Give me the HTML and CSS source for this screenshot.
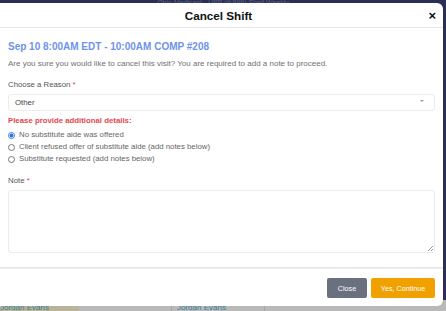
FILE: index.html
```html
<!DOCTYPE html>
<html>
<head>
<meta charset="utf-8">
<link rel="stylesheet" href="styles.css">
</head>
<body>
<div class="page">
  <div class="topbar">Ohio Medicaid - UPP (9:899) Shell Weekly</div>
  <div class="rows">
    <div class="row">
      <span class="cell c1">Jordan Evans</span>
      <span class="cell c2"></span>
      <span class="cell c3">Jordan Evans</span>
      <span class="cell c4"></span>
    </div>
  </div>
</div>
<div class="modal">
  <div class="modal-header">
    <h1 class="modal-title">Cancel Shift</h1>
    <span class="close-x">&#215;</span>
  </div>
  <div class="modal-body">
    <div class="shift">Sep 10 8:00AM EDT - 10:00AM COMP #208</div>
    <p class="intro">Are you sure you would like to cancel this visit? You are required to add a note to proceed.</p>
    <label class="label">Choose a Reason <span class="req">*</span></label>
    <div class="select"><span>Other</span><span class="caret"></span></div>
    <div class="details">Please provide additional details:</div>
    <div class="radios">
      <label class="radio"><span class="dot checked"></span>No substitute aide was offered</label>
      <label class="radio"><span class="dot"></span>Client refused offer of substitute aide (add notes below)</label>
      <label class="radio"><span class="dot"></span>Substitute requested (add notes below)</label>
    </div>
    <label class="label note-label">Note <span class="req">*</span></label>
    <div class="textarea"><span class="grip"></span></div>
  </div>
  <div class="modal-footer">
    <button class="btn btn-close">Close</button>
    <button class="btn btn-yes">Yes, Continue</button>
  </div>
</div>
</body>
</html>
```
FILE: styles.css
```css
* { box-sizing: border-box; }
html, body { margin: 0; padding: 0; }
body {
  width: 446px;
  height: 311px;
  overflow: hidden;
  background: #2b2f55;
  font-family: "Liberation Sans", Arial, sans-serif;
  position: relative;
}
.page { display: flex; flex-direction: column; height: 311px; }
.topbar {
  height: 300px;
  color: #5c628a;
  font-size: 7px;
  text-align: center;
  line-height: 5px;
}
.rows { flex: 1; background: #b9b9b9; }
.row { display: flex; height: 11px; }
.cell { font-size: 8px; color: #3f7f99; line-height: 6px; padding-top: 5px; white-space: nowrap; }
.c1 { width: 79px; background: #b8b39a; padding-left: 0; overflow: hidden; }
.c2 { width: 92px; }
.c3 { width: 93px; border-left: 1px solid #a5a5a5; padding-left: 5px; }
.c4 { flex: 1; border-left: 1px solid #a5a5a5; }

.modal {
  position: absolute;
  left: -6px;
  top: 3px;
  width: 449px;
  height: 303px;
  background: #fff;
  border-radius: 6px;
  display: flex;
  flex-direction: column;
}
.modal-header {
  height: 25px;
  border-bottom: 1px solid #e6e6e6;
  display: flex;
  align-items: center;
  justify-content: center;
  position: relative;
}
.modal-title {
  margin: 0;
  font-size: 11.7px;
  font-weight: bold;
  color: #111;
}
.close-x {
  position: absolute;
  right: 7px;
  top: 6px;
  font-size: 13px;
  font-weight: bold;
  color: #111;
  line-height: 13px;
}
.modal-body {
  flex: 1;
  padding: 13px 8px 0 14px;
  display: flex;
  flex-direction: column;
  border-bottom: 1px solid #e6e6e6;
}
.shift {
  color: #6e93ea;
  font-weight: bold;
  font-size: 10px;
  line-height: 12px;
}
.intro {
  margin: 6px 0 0 0;
  font-size: 8px;
  color: #707070;
  line-height: 10px;
}
.label {
  font-size: 7.8px;
  color: #555;
  line-height: 10px;
  margin-top: 11px;
}
.req { color: #e0474c; }
.select {
  margin-top: 4px;
  height: 17px;
  border: 1px solid #ececec;
  border-radius: 3px;
  display: flex;
  align-items: center;
  justify-content: space-between;
  padding: 0 10px 0 6px;
  font-size: 7.8px;
  color: #444;
}
.caret {
  width: 0; height: 0;
  border-left: 2.5px solid transparent;
  border-right: 2.5px solid transparent;
  border-top: 2.5px solid #999;
  margin-top: -4px;
}
.details {
  margin-top: 5px;
  color: #e4474c;
  font-weight: bold;
  font-size: 7.8px;
  line-height: 10px;
}
.radios { display: flex; flex-direction: column; margin-top: 3px; }
.radio {
  display: flex;
  align-items: center;
  font-size: 7.8px;
  color: #666;
  line-height: 12px;
  height: 12px;
}
.dot {
  width: 7px; height: 7px;
  border: 1px solid #777;
  border-radius: 50%;
  margin: 0 4px 0 0;
  background: #fff;
}
.dot.checked {
  border-color: #3b7ddd;
  background: radial-gradient(circle, #2f73de 0 1.8px, #fff 2.2px);
}
.note-label { margin-top: 11px; }
.textarea {
  margin-top: 4px;
  height: 63px;
  border: 1px solid #ececec;
  border-radius: 3px;
  position: relative;
}
.grip {
  position: absolute;
  right: 1px; bottom: 1px;
  width: 5px; height: 5px;
  background: linear-gradient(135deg, transparent 45%, #999 45% 55%, transparent 55% 70%, #999 70% 80%, transparent 80%);
}
.modal-footer {
  height: 38px;
  display: flex;
  justify-content: flex-end;
  align-items: center;
  gap: 4px;
  padding: 1px 8px 0 0;
  border-top: 1px solid #f0f0f0;
}
.btn {
  height: 20px;
  border: none;
  border-radius: 2px;
  color: #fff;
  font-family: "Liberation Sans", Arial, sans-serif;
  font-size: 7.2px;
  padding: 0;
}
.btn-close { width: 40px; background: #6b7080; }
.btn-yes { width: 64px; background: #f0a100; }
```
